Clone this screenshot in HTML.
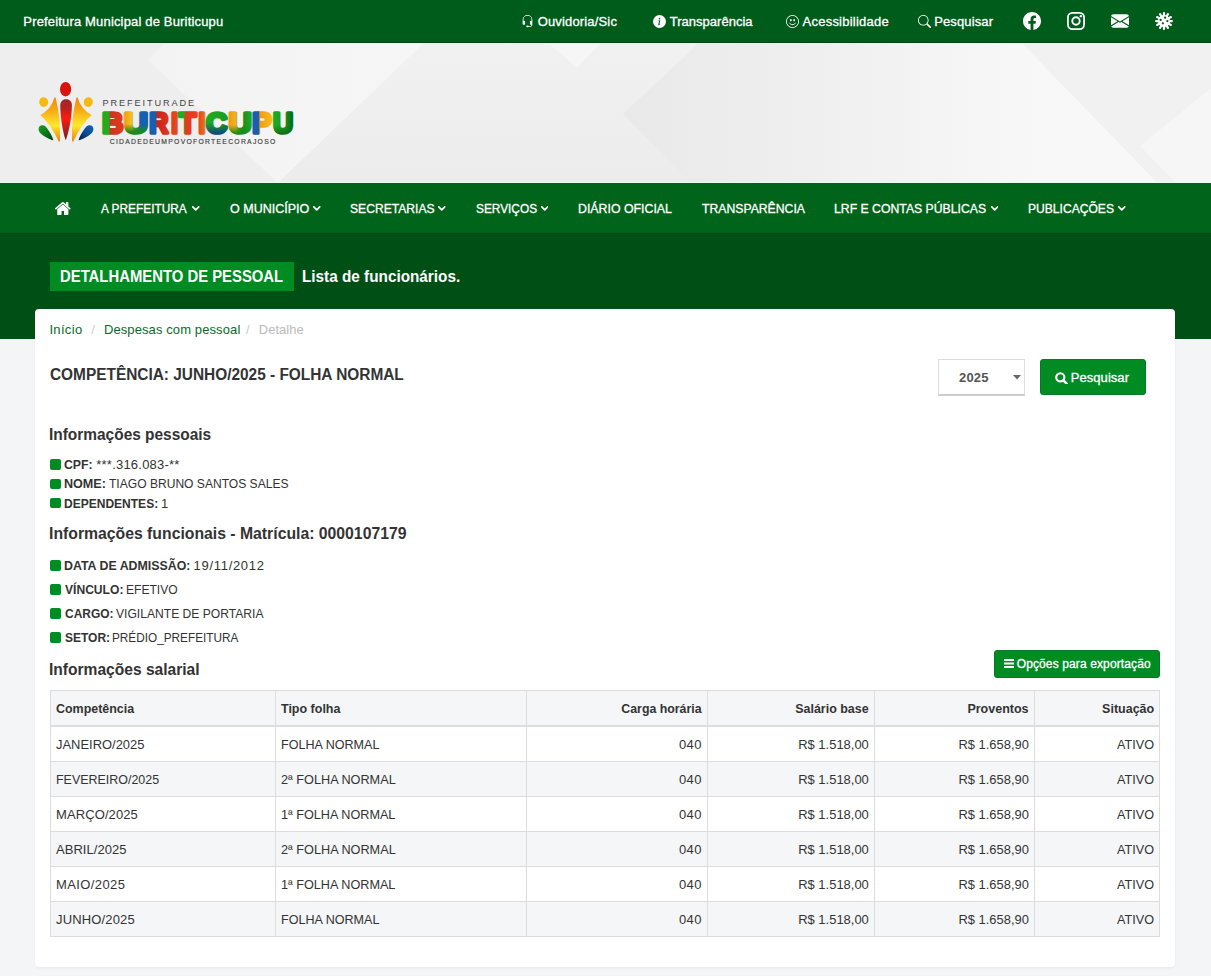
<!DOCTYPE html><html lang="pt-br"><head><meta charset="utf-8"><title>Detalhamento de Pessoal - Prefeitura Municipal de Buriticupu</title><style>
*{box-sizing:border-box}
html,body{margin:0;padding:0}
body{width:1211px;height:976px;overflow:hidden;position:relative;background:#f3f5f7;font-family:"Liberation Sans",sans-serif;font-size:13px;color:#333}
a{text-decoration:none}
.abs{position:absolute}
.t{position:absolute;white-space:nowrap;display:block;margin:0;padding:0;transform-origin:0 50%}
#topbar{position:absolute;left:0;top:0;width:1211px;height:43px;background:#005c1a;border-bottom:1px solid #004513}
#header{position:absolute;left:0;top:43px;width:1211px;height:140px;background:#f0f0f0;overflow:hidden}
#nav{position:absolute;left:0;top:183px;width:1211px;height:51px;background:#00651a;border-bottom:1px solid #004411}
#band{position:absolute;left:0;top:234px;width:1211px;height:105px;background:#005016}
#badge{position:absolute;left:50px;top:262px;width:244px;height:29px;background:#008c23}
#card{position:absolute;left:35px;top:309px;width:1140px;height:658px;background:#fff;border-radius:4px;box-shadow:0 1px 3px rgba(0,0,0,.06)}
.ico{position:absolute;display:block}
.w{-webkit-text-stroke:.3px #fff}
.bul{position:absolute;left:50.4px;width:10.5px;height:10.5px;border-radius:2px;background:#008c23}
.btn{position:absolute;background:#008c23;border:1px solid #057a28;border-radius:3px}
#sel{position:absolute;left:938px;top:359px;width:87px;height:37px;margin:0;background:#fff;border:1px solid #ddd;border-bottom:2px solid #ccc;border-radius:0;-webkit-appearance:none;appearance:none;outline:0;font-family:"Liberation Sans",sans-serif;font-size:13px;font-weight:700;color:#555;padding:0 0 0 20px;letter-spacing:.15px}
table{position:absolute;left:50px;top:690px;width:1110px;border-collapse:separate;border-spacing:0;table-layout:fixed;border-top:1px solid #ddd;border-left:1px solid #ddd;color:#333}
th,td{padding:0 5px;border-right:1px solid #ddd;border-bottom:1px solid #ddd;height:35px;line-height:34px;font-size:13px;text-align:left;white-space:nowrap;overflow:hidden;font-weight:400}
th{height:36px;border-bottom:2px solid #ddd;background:#f5f6f7;font-weight:700}
tr.g td{background:#f5f6f7}
.r{text-align:right}
.t.c{position:relative;top:1px;display:inline-block;transform-origin:0 50%;vertical-align:top}
.t.c.r{transform-origin:100% 50%}
</style></head><body>
<header>
<div id="topbar"></div>
<svg class="ico" style="left:521.2px;top:15.3px" width="13" height="13" viewBox="0 0 16 16" fill="#fff"><path d="M8 1a5 5 0 0 0-5 5v1h1a1 1 0 0 1 1 1v3a1 1 0 0 1-1 1H3a1 1 0 0 1-1-1V6a6 6 0 1 1 12 0v6a2.5 2.5 0 0 1-2.5 2.5H9.366a1 1 0 0 1-.866.5h-1a1 1 0 1 1 0-2h1a1 1 0 0 1 .866.5H11.500A1.500 1.500 0 0 0 13 12h-1a1 1 0 0 1-1-1V8a1 1 0 0 1 1-1h1V6a5 5 0 0 0-5-5z"/></svg>
<svg class="ico" style="left:652.9px;top:15.0px" width="13" height="13" viewBox="0 0 16 16" fill="#fff"><path d="M8 16A8 8 0 1 0 8 0a8 8 0 0 0 0 16zm.93-9.412-1 4.705c-.07.34.029.533.304.533.194 0 .487-.07.686-.246l-.088.416c-.287.346-.92.598-1.465.598-.703 0-1.002-.422-.808-1.319l.738-3.468c.064-.293.006-.399-.287-.47l-.451-.081.082-.381 2.290-.287zM8 5.500a1 1 0 1 1 0-2 1 1 0 0 1 0 2z"/></svg>
<svg class="ico" style="left:786.1px;top:15.3px" width="13" height="13" viewBox="0 0 16 16" fill="#fff"><path d="M8 15A7 7 0 1 1 8 1a7 7 0 0 1 0 14zm0 1A8 8 0 1 0 8 0a8 8 0 0 0 0 16z"/><path d="M4.285 9.567a.5.5 0 0 1 .683.183A3.498 3.498 0 0 0 8 11.500a3.498 3.498 0 0 0 3.032-1.750.5.5 0 1 1 .866.5A4.498 4.498 0 0 1 8 12.500a4.498 4.498 0 0 1-3.898-2.250.5.5 0 0 1 .183-.683zM7 6.500C7 7.328 6.552 8 6 8s-1-.672-1-1.500S5.448 5 6 5s1 .672 1 1.500zm4 0c0 .828-.448 1.500-1 1.500s-1-.672-1-1.500S9.448 5 10 5s1 .672 1 1.500z"/></svg>
<svg class="ico" style="left:918.2px;top:15.0px" width="13" height="13" viewBox="0 0 16 16" fill="#fff"><path d="M11.742 10.344a6.500 6.500 0 1 0-1.397 1.398h-.001c.03.04.062.078.098.115l3.850 3.850a1 1 0 0 0 1.415-1.414l-3.850-3.850a1.007 1.007 0 0 0-.115-.1zM12 6.500a5.500 5.500 0 1 1-11 0 5.500 5.500 0 0 1 11 0z"/></svg>
<svg class="ico" style="left:1023.0px;top:12.0px" width="18" height="18" viewBox="0 0 16 16" fill="#fff"><path d="M16 8.049c0-4.446-3.582-8.050-8-8.050C3.580 0-.002 3.603-.002 8.050c0 4.017 2.926 7.347 6.750 7.951v-5.625h-2.030V8.050H6.750V6.275c0-2.017 1.195-3.131 3.022-3.131.876 0 1.791.157 1.791.157v1.980h-1.009c-.993 0-1.303.621-1.303 1.258v1.510h2.218l-.354 2.326H9.250V16c3.824-.604 6.750-3.934 6.750-7.951z"/></svg>
<svg class="ico" style="left:1067.0px;top:12.0px" width="18" height="18" viewBox="0 0 16 16" fill="#fff"><rect x="0.8" y="0.8" width="14.4" height="14.4" rx="4" fill="none" stroke="#fff" stroke-width="1.6"/><circle cx="8" cy="8" r="3.3" fill="none" stroke="#fff" stroke-width="1.7"/><circle cx="12.3" cy="3.7" r="1.05"/></svg>
<svg class="ico" style="left:1111.0px;top:12.0px" width="18" height="18" viewBox="0 0 16 16" fill="#fff"><path d="M.05 3.555A2 2 0 0 1 2 2h12a2 2 0 0 1 1.950 1.555L8 8.414.05 3.555ZM0 4.697v7.104l5.803-3.558L0 4.697ZM6.761 8.830l-6.570 4.027A2 2 0 0 0 2 14h12a2 2 0 0 0 1.808-1.144l-6.570-4.027L8 9.586l-1.239-.757Zm3.436-.586L16 11.801V4.697l-5.803 3.546Z"/></svg>
<svg class="ico" style="left:1155.0px;top:12.0px" width="18" height="18" viewBox="0 0 16 16" fill="#fff"><path d="M8 0a1 1 0 0 1 1 1v1.402c0 .511.677.693.933.250l.7-1.214a1 1 0 0 1 1.733 1l-.701 1.214c-.256.443.240.939.683.683l1.214-.701a1 1 0 0 1 1 1.732l-1.214.701c-.443.256-.262.933.250.933H15a1 1 0 1 1 0 2h-1.402c-.512 0-.693.677-.250.933l1.214.701a1 1 0 1 1-1 1.732l-1.214-.7c-.443-.257-.939.240-.683.682l.701 1.214a1 1 0 1 1-1.732 1l-.701-1.214c-.256-.443-.933-.262-.933.250V15a1 1 0 1 1-2 0v-1.402c0-.512-.677-.693-.933-.250l-.701 1.214a1 1 0 0 1-1.732-1l.7-1.214c.257-.443-.240-.939-.682-.683l-1.214.701a1 1 0 1 1-1-1.732l1.214-.701c.443-.256.261-.933-.250-.933H1a1 1 0 1 1 0-2h1.402c.511 0 .693-.677.250-.933l-1.214-.701a1 1 0 1 1 1-1.732l1.214.701c.443.256.939-.240.683-.683l-.701-1.214a1 1 0 0 1 1.732-1l.701 1.214c.256.443.933.261.933-.250V1a1 1 0 0 1 1-1Zm2 5a1 1 0 1 0-2 0 1 1 0 0 0 2 0ZM6 7a1 1 0 1 0-2 0 1 1 0 0 0 2 0Zm1 4a1 1 0 1 0 0-2 1 1 0 0 0 0 2Zm5-3a1 1 0 1 0-2 0 1 1 0 0 0 2 0Z"/></svg>
<span class="t w" style="left:23.3px;top:15.0px;font-size:13px;line-height:13px;color:#fff;letter-spacing:0.166px;">Prefeitura Municipal de Buriticupu</span>
<a class="t w" href="#" style="left:537.7px;top:15.0px;font-size:13px;line-height:13px;color:#fff;letter-spacing:0.159px;">Ouvidoria/Sic</a>
<a class="t w" href="#" style="left:669.8px;top:15.0px;font-size:13px;line-height:13px;color:#fff;letter-spacing:0.009px;">Transparência</a>
<a class="t w" href="#" style="left:802.6px;top:15.0px;font-size:13px;line-height:13px;color:#fff;letter-spacing:0.225px;">Acessibilidade</a>
<a class="t w" href="#" style="left:934.2px;top:15.0px;font-size:13px;line-height:13px;color:#fff;letter-spacing:0.134px;">Pesquisar</a>
<div id="header"></div>
<svg class="ico" style="left:0;top:43px" width="1211" height="140" viewBox="0 43 1211 140">
<defs>
<linearGradient id="z0" x1="0" y1="0" x2="1" y2="0"><stop offset="0.0000" stop-color="#20ac22"/><stop offset="0.3600" stop-color="#20ac22"/><stop offset="0.4200" stop-color="#c8381c"/><stop offset="1.0000" stop-color="#e23a1c"/></linearGradient>
<linearGradient id="z1" x1="0" y1="0" x2="1" y2="0"><stop offset="0.0000" stop-color="#f29a14"/><stop offset="0.3000" stop-color="#f6c21c"/><stop offset="0.4200" stop-color="#7aa01c"/><stop offset="0.5800" stop-color="#1c78a0"/><stop offset="0.6800" stop-color="#1560b0"/><stop offset="1.0000" stop-color="#1560b0"/></linearGradient>
<linearGradient id="o1" x1="0" y1="0" x2="0" y2="1"><stop offset="0.55" stop-color="#1c8a1c" stop-opacity="0"/><stop offset="0.85" stop-color="#1c8a1c" stop-opacity="1"/></linearGradient>
<linearGradient id="z2" x1="0" y1="0" x2="1" y2="0"><stop offset="0.0000" stop-color="#1560b0"/><stop offset="0.3200" stop-color="#1560b0"/><stop offset="0.4000" stop-color="#c8241a"/><stop offset="1.0000" stop-color="#e23a1c"/></linearGradient>
<linearGradient id="z3" x1="0" y1="0" x2="1" y2="0"><stop offset="0.0000" stop-color="#e23a1c"/><stop offset="1.0000" stop-color="#ea4a1e"/></linearGradient>
<linearGradient id="z4" x1="0" y1="0" x2="1" y2="0"><stop offset="0.0000" stop-color="#20ac22"/><stop offset="0.3000" stop-color="#20ac22"/><stop offset="0.3800" stop-color="#e23a1c"/><stop offset="1.0000" stop-color="#e8401c"/></linearGradient>
<linearGradient id="z5" x1="0" y1="0" x2="1" y2="0"><stop offset="0.0000" stop-color="#e8401c"/><stop offset="1.0000" stop-color="#f0701c"/></linearGradient>
<linearGradient id="z6" x1="0" y1="0" x2="1" y2="0"><stop offset="0.0000" stop-color="#20ac22"/><stop offset="1.0000" stop-color="#1c9a1c"/></linearGradient>
<linearGradient id="o6" x1="0" y1="0" x2="0" y2="1"><stop offset="0.5" stop-color="#0e3f84" stop-opacity="0"/><stop offset="0.95" stop-color="#0e3f84" stop-opacity="1"/></linearGradient>
<linearGradient id="z7" x1="0" y1="0" x2="1" y2="0"><stop offset="0.0000" stop-color="#f29a14"/><stop offset="0.3000" stop-color="#f4b018"/><stop offset="0.4200" stop-color="#6a9a1c"/><stop offset="0.6000" stop-color="#1c8a1c"/><stop offset="1.0000" stop-color="#20ac22"/></linearGradient>
<linearGradient id="o7" x1="0" y1="0" x2="0" y2="1"><stop offset="0.6" stop-color="#1c8a1c" stop-opacity="0"/><stop offset="0.9" stop-color="#1c8a1c" stop-opacity="1"/></linearGradient>
<linearGradient id="z8" x1="0" y1="0" x2="1" y2="0"><stop offset="0.0000" stop-color="#1560b0"/><stop offset="0.3200" stop-color="#1560b0"/><stop offset="0.3800" stop-color="#f29a14"/><stop offset="1.0000" stop-color="#f6c21c"/></linearGradient>
<linearGradient id="z9" x1="0" y1="0" x2="1" y2="0"><stop offset="0.0000" stop-color="#20ac22"/><stop offset="0.5000" stop-color="#1c9a1c"/><stop offset="0.8000" stop-color="#0d6e16"/><stop offset="1.0000" stop-color="#0d6e16"/></linearGradient>
<linearGradient id="o9" x1="0" y1="0" x2="0" y2="1"><stop offset="0.6" stop-color="#0d6e16" stop-opacity="0"/><stop offset="0.95" stop-color="#0d6e16" stop-opacity="1"/></linearGradient>
<pattern id="gw" patternUnits="userSpaceOnUse" x="100" y="104" width="200" height="38"><g transform="translate(-100 -104)"><rect x="100" y="104" width="24.2" height="38" fill="url(#z0)"/><rect x="124.2" y="104" width="24.1" height="38" fill="url(#z1)"/><rect x="124.2" y="109" width="24.1" height="27" fill="url(#o1)"/><rect x="148.3" y="104" width="22.2" height="38" fill="url(#z2)"/><rect x="170.5" y="104" width="7.3" height="38" fill="url(#z3)"/><rect x="177.8" y="104" width="20.2" height="38" fill="url(#z4)"/><rect x="198" y="104" width="7.3" height="38" fill="url(#z5)"/><rect x="205.3" y="104" width="23.2" height="38" fill="url(#z6)"/><rect x="205.3" y="109" width="23.2" height="27" fill="url(#o6)"/><rect x="228.5" y="104" width="23.4" height="38" fill="url(#z7)"/><rect x="228.5" y="109" width="23.4" height="27" fill="url(#o7)"/><rect x="251.9" y="104" width="20.9" height="38" fill="url(#z8)"/><rect x="272.8" y="104" width="23.2" height="38" fill="url(#z9)"/><rect x="272.8" y="109" width="23.2" height="27" fill="url(#o9)"/></g></pattern>
<linearGradient id="gr" x1="0" y1="0" x2="0" y2="1"><stop offset="0.0000" stop-color="#a0262a"/><stop offset="0.2200" stop-color="#b4241e"/><stop offset="0.4600" stop-color="#ff1a10"/><stop offset="0.7500" stop-color="#b0201c"/><stop offset="1.0000" stop-color="#7a1818"/></linearGradient>
<linearGradient id="gy" x1="0" y1="0" x2="0" y2="1"><stop offset="0.0000" stop-color="#f08a10"/><stop offset="0.2800" stop-color="#f8a814"/><stop offset="0.6400" stop-color="#fde82c"/><stop offset="0.8000" stop-color="#f8b818"/><stop offset="1.0000" stop-color="#ee8410"/></linearGradient>
<linearGradient id="gg" x1="0" y1="0" x2="1" y2="1"><stop offset="0.0000" stop-color="#14a020"/><stop offset="0.5000" stop-color="#0c7a18"/><stop offset="1.0000" stop-color="#083c10"/></linearGradient>
<linearGradient id="gb" x1="1" y1="0" x2="0" y2="1"><stop offset="0.0000" stop-color="#1460b4"/><stop offset="0.5000" stop-color="#0c4c94"/><stop offset="1.0000" stop-color="#061c40"/></linearGradient>
</defs>
<defs><linearGradient id="h1" gradientUnits="userSpaceOnUse" x1="623" y1="0" x2="1040" y2="0"><stop offset="0" stop-color="#e9e9e9"/><stop offset=".45" stop-color="#efefef"/><stop offset="1" stop-color="#f8f8f8"/></linearGradient><linearGradient id="h2" gradientUnits="userSpaceOnUse" x1="150" y1="0" x2="430" y2="0"><stop offset="0" stop-color="#f3f3f3"/><stop offset="1" stop-color="#f6f6f6"/></linearGradient><linearGradient id="h3" gradientUnits="userSpaceOnUse" x1="0" y1="43" x2="0" y2="183"><stop offset="0" stop-color="#f1f1f1"/><stop offset="1" stop-color="#ececec"/></linearGradient></defs><rect x="0" y="43" width="1211" height="140" fill="#efefef"/><polygon points="0,43 165,43 148,60 278,183 0,183" fill="#eeeeee"/><polygon points="148,60 165,43 424,43 278,183" fill="url(#h2)"/><polygon points="424,43 699,43 623,114 691,183 278,183" fill="url(#h3)"/><polygon points="548,43 601,43 577,68" fill="#f6f6f6"/><polygon points="623,114 699,43 1022,43 1158,183 691,183" fill="url(#h1)"/><polygon points="1022,43 1211,43 1211,183 1158,183" fill="#f1f1f1"/><polygon points="1211,88 1140,146 1176,183 1211,183" fill="#f6f6f6"/><rect x="0" y="43" width="1211" height="1" fill="#e2fff0"/><rect x="0" y="182" width="1211" height="1" fill="#e2fff0"/>
<ellipse cx="65.6" cy="89.2" rx="5.6" ry="7.2" fill="#d6160a"/>
<path d="M60.3 105.2C60.3 97.3 71.9 97.3 71.9 105.2C71.9 118 68.3 134 65.7 140.2C63.2 134 60.3 118 60.3 105.2Z" fill="url(#gr)"/>
<ellipse cx="43.7" cy="102.1" rx="4.5" ry="4.8" fill="#f6b90f" transform="rotate(-20 43.7 102.1)"/>
<ellipse cx="88.3" cy="102.1" rx="4.5" ry="4.8" fill="#f6b90f" transform="rotate(20 88.3 102.1)"/>
<path d="M54.4 97.6Q51 109.500 40.4 115Q51.200 125 58.7 141.4L60 141.4Q60.800 118 55.600 97.6Z" fill="url(#gy)"/>
<path d="M77.6 97.6Q81 109.500 91.6 115Q80.800 125 73.3 141.4L72 141.4Q71.200 118 76.400 97.6Z" fill="url(#gy)"/>
<path d="M38.6 129.2C38.400 125.4 43.2 123.800 46.2 127.2C49.4 131 52.800 137 53.4 140.200C49.6 139.600 43.2 136 40.4 133.200C39.2 132 38.700 130.600 38.600 129.200Z" fill="url(#gg)"/>
<path d="M93.4 129.200C93.600 125.400 88.800 123.800 85.800 127.200C82.600 131 79.200 137 78.600 140.200C82.400 139.600 88.800 136 91.600 133.200C92.800 132 93.300 130.600 93.400 129.200Z" fill="url(#gb)"/>
<text x="102.6" y="105.8" font-family="Liberation Sans, sans-serif" font-size="9.2" fill="#444" textLength="91.5" lengthAdjust="spacing">PREFEITURADE</text>
<text y="133.1" font-family="Liberation Sans, sans-serif" font-size="30.2" font-weight="700" fill="url(#gw)" stroke="url(#gw)" stroke-width="3.7" stroke-linejoin="round"><tspan x="102.1" textLength="21.3" lengthAdjust="spacingAndGlyphs">B</tspan><tspan x="123.9" textLength="24.0" lengthAdjust="spacingAndGlyphs">U</tspan><tspan x="149.2" textLength="19.1" lengthAdjust="spacingAndGlyphs">R</tspan><tspan x="171.2" textLength="6.7" lengthAdjust="spacingAndGlyphs">I</tspan><tspan x="179.1" textLength="17.3" lengthAdjust="spacingAndGlyphs">T</tspan><tspan x="198.6" textLength="6.7" lengthAdjust="spacingAndGlyphs">I</tspan><tspan x="206.1" textLength="21.3" lengthAdjust="spacingAndGlyphs">C</tspan><tspan x="228.6" textLength="23.2" lengthAdjust="spacingAndGlyphs">U</tspan><tspan x="252.2" textLength="19.5" lengthAdjust="spacingAndGlyphs">P</tspan><tspan x="273.1" textLength="20.1" lengthAdjust="spacingAndGlyphs">U</tspan></text>
<text x="109.7" y="144" font-family="Liberation Sans, sans-serif" font-size="6.8" fill="#3c3c3c" stroke="#3c3c3c" stroke-width=".15" textLength="165.6" lengthAdjust="spacing">CIDADEDEUMPOVOFORTEECORAJOSO</text>
</svg>
</header>
<nav>
<div id="nav"></div>
<svg preserveAspectRatio="none" class="ico" style="left:55.4px;top:202.4px" width="15.6" height="12.9" viewBox="26 253 1612 1283" fill="#fff"><path d="M1408 992v480q0 26-19 45t-45 19h-384v-384h-256v384h-384q-26 0-45-19t-19-45v-480q0-1 .5-3t.5-3l575-474 575 474q1 2 1 6zm223-69l-62 74q-8 9-21 11h-3q-13 0-21-7l-692-577-692 577q-12 8-24 7-13-2-21-11l-62-74q-8-10-7-23.500t11-21.500l719-599q32-26 76-26t76 26l244 204v-195q0-14 9-23t23-9h192q14 0 23 9t9 23v408l219 182q10 8 11 21.500t-7 23.500z"/></svg>
<svg class="ico" style="left:192.3px;top:206.3px" width="7.5" height="5" viewBox="0 0 7.5 5" fill="#fff"><path d="M0.8 0.8L3.75 3.8L6.7 0.8" fill="none" stroke="#fff" stroke-width="1.7" stroke-linecap="round" stroke-linejoin="round"/></svg>
<svg class="ico" style="left:313.0px;top:206.3px" width="7.5" height="5" viewBox="0 0 7.5 5" fill="#fff"><path d="M0.8 0.8L3.75 3.8L6.7 0.8" fill="none" stroke="#fff" stroke-width="1.7" stroke-linecap="round" stroke-linejoin="round"/></svg>
<svg class="ico" style="left:438.3px;top:206.3px" width="7.5" height="5" viewBox="0 0 7.5 5" fill="#fff"><path d="M0.8 0.8L3.75 3.8L6.7 0.8" fill="none" stroke="#fff" stroke-width="1.7" stroke-linecap="round" stroke-linejoin="round"/></svg>
<svg class="ico" style="left:540.6px;top:206.3px" width="7.5" height="5" viewBox="0 0 7.5 5" fill="#fff"><path d="M0.8 0.8L3.75 3.8L6.7 0.8" fill="none" stroke="#fff" stroke-width="1.7" stroke-linecap="round" stroke-linejoin="round"/></svg>
<svg class="ico" style="left:990.7px;top:206.3px" width="7.5" height="5" viewBox="0 0 7.5 5" fill="#fff"><path d="M0.8 0.8L3.75 3.8L6.7 0.8" fill="none" stroke="#fff" stroke-width="1.7" stroke-linecap="round" stroke-linejoin="round"/></svg>
<svg class="ico" style="left:1118.1px;top:206.3px" width="7.5" height="5" viewBox="0 0 7.5 5" fill="#fff"><path d="M0.8 0.8L3.75 3.8L6.7 0.8" fill="none" stroke="#fff" stroke-width="1.7" stroke-linecap="round" stroke-linejoin="round"/></svg>
<a class="t w" href="#" style="left:101.4px;top:201.8px;font-size:13px;line-height:13px;color:#fff;transform:scaleX(0.9135);">A PREFEITURA</a>
<a class="t w" href="#" style="left:229.6px;top:201.8px;font-size:13px;line-height:13px;color:#fff;transform:scaleX(0.9623);">O MUNICÍPIO</a>
<a class="t w" href="#" style="left:350.0px;top:201.8px;font-size:13px;line-height:13px;color:#fff;transform:scaleX(0.9318);">SECRETARIAS</a>
<a class="t w" href="#" style="left:475.8px;top:201.8px;font-size:13px;line-height:13px;color:#fff;transform:scaleX(0.9122);">SERVIÇOS</a>
<a class="t w" href="#" style="left:577.8px;top:201.8px;font-size:13px;line-height:13px;color:#fff;transform:scaleX(0.9496);">DIÁRIO OFICIAL</a>
<a class="t w" href="#" style="left:701.7px;top:201.8px;font-size:13px;line-height:13px;color:#fff;transform:scaleX(0.9395);">TRANSPARÊNCIA</a>
<a class="t w" href="#" style="left:834.3px;top:201.8px;font-size:13px;line-height:13px;color:#fff;transform:scaleX(0.9418);">LRF E CONTAS PÚBLICAS</a>
<a class="t w" href="#" style="left:1027.9px;top:201.8px;font-size:13px;line-height:13px;color:#fff;transform:scaleX(0.9295);">PUBLICAÇÕES</a>
</nav>
<main>
<div id="band"></div><div id="badge"></div>
<h1 class="t" style="left:59.8px;top:269.0px;font-size:16px;line-height:16px;font-weight:700;color:#fff;transform:scaleX(0.9287);">DETALHAMENTO DE PESSOAL</h1>
<span class="t" style="left:302.4px;top:269.0px;font-size:16px;line-height:16px;font-weight:700;color:#fff;transform:scaleX(0.9565);">Lista de funcionários.</span>
<div id="card"></div>
<a class="t" href="#" style="left:49.4px;top:323.1px;font-size:13px;line-height:13px;color:#0a6a2a;letter-spacing:0.334px;">Início</a>
<span class="t" style="left:91.3px;top:323.1px;font-size:13px;line-height:13px;color:#ccc;">/</span>
<a class="t" href="#" style="left:103.9px;top:323.1px;font-size:13px;line-height:13px;color:#0a6a2a;letter-spacing:0.104px;">Despesas com pessoal</a>
<span class="t" style="left:246.1px;top:323.1px;font-size:13px;line-height:13px;color:#ccc;">/</span>
<span class="t" style="left:258.7px;top:323.1px;font-size:13px;line-height:13px;color:#bbb;letter-spacing:0.056px;">Detalhe</span>
<h2 class="t" style="left:49.9px;top:366.6px;font-size:16px;line-height:16px;font-weight:700;color:#333;transform:scaleX(0.9628);">COMPETÊNCIA: JUNHO/2025 - FOLHA NORMAL</h2>
<select id="sel"><option>2025</option><option>2024</option><option>2023</option></select>
<svg class="ico" style="left:1013.4px;top:375px" width="8" height="4.5" viewBox="0 0 8 4.5"><path d="M0 0h8L4 4.5z" fill="#666"/></svg>
<div class="btn" style="left:1040px;top:359px;width:106px;height:36px"></div>
<a class="t w" href="#" style="left:1070.8px;top:371.0px;font-size:13px;line-height:13px;color:#fff;letter-spacing:0.046px;">Pesquisar</a>
<h3 class="t" style="left:49.4px;top:426.8px;font-size:16px;line-height:16px;font-weight:700;color:#333;transform:scaleX(0.9650);">Informações pessoais</h3>
<i class="bul" style="top:459.2px"></i>
<b class="t" style="left:64.4px;top:458.1px;font-size:13px;line-height:13px;font-weight:700;color:#333;transform:scaleX(0.9430);">CPF:</b>
<span class="t" style="left:96.3px;top:458.1px;font-size:13px;line-height:13px;color:#333;letter-spacing:0.220px;">***.316.083-**</span>
<i class="bul" style="top:478.5px"></i>
<b class="t" style="left:64.0px;top:477.4px;font-size:13px;line-height:13px;font-weight:700;color:#333;transform:scaleX(0.9677);">NOME:</b>
<span class="t" style="left:109.4px;top:477.4px;font-size:13px;line-height:13px;color:#333;transform:scaleX(0.9283);">TIAGO BRUNO SANTOS SALES</span>
<i class="bul" style="top:497.9px"></i>
<b class="t" style="left:64.0px;top:496.8px;font-size:13px;line-height:13px;font-weight:700;color:#333;transform:scaleX(0.9244);">DEPENDENTES:</b>
<span class="t" style="left:161.1px;top:496.8px;font-size:13px;line-height:13px;color:#333;">1</span>
<h3 class="t" style="left:49.4px;top:526.0px;font-size:16px;line-height:16px;font-weight:700;color:#333;transform:scaleX(0.9853);">Informações funcionais - Matrícula: 0000107179</h3>
<i class="bul" style="top:560.3px"></i>
<b class="t" style="left:64.3px;top:559.2px;font-size:13px;line-height:13px;font-weight:700;color:#333;transform:scaleX(0.9511);">DATA DE ADMISSÃO:</b>
<span class="t" style="left:193.6px;top:559.2px;font-size:13px;line-height:13px;color:#333;letter-spacing:0.693px;">19/11/2012</span>
<i class="bul" style="top:584.1px"></i>
<b class="t" style="left:65.1px;top:583.0px;font-size:13px;line-height:13px;font-weight:700;color:#333;transform:scaleX(0.9296);">VÍNCULO:</b>
<span class="t" style="left:126.0px;top:583.0px;font-size:13px;line-height:13px;color:#333;transform:scaleX(0.9290);">EFETIVO</span>
<i class="bul" style="top:608.1px"></i>
<b class="t" style="left:64.7px;top:607.0px;font-size:13px;line-height:13px;font-weight:700;color:#333;transform:scaleX(0.9193);">CARGO:</b>
<span class="t" style="left:116.2px;top:607.0px;font-size:13px;line-height:13px;color:#333;transform:scaleX(0.9306);">VIGILANTE DE PORTARIA</span>
<i class="bul" style="top:632.1px"></i>
<b class="t" style="left:64.9px;top:631.0px;font-size:13px;line-height:13px;font-weight:700;color:#333;transform:scaleX(0.9224);">SETOR:</b>
<span class="t" style="left:112.2px;top:631.0px;font-size:13px;line-height:13px;color:#333;transform:scaleX(0.9064);">PRÉDIO_PREFEITURA</span>
<h3 class="t" style="left:49.4px;top:661.8px;font-size:16px;line-height:16px;font-weight:700;color:#333;transform:scaleX(0.9732);">Informações salarial</h3>
<div class="btn" style="left:994px;top:650px;width:166px;height:28px"></div>
<a class="t w" href="#" style="left:1016.7px;top:657.6px;font-size:12px;line-height:12px;color:#fff;letter-spacing:0.120px;">Opções para exportação</a>
<table><colgroup><col style="width:225px"><col style="width:251px"><col style="width:181px"><col style="width:167px"><col style="width:160px"><col style="width:125px"></colgroup>
<thead><tr><th><span class="t c" style="transform:scaleX(0.9569);">Competência</span></th><th><span class="t c" style="transform:scaleX(0.9605);">Tipo folha</span></th><th class="r"><span class="t c r" style="transform:scaleX(0.9488);">Carga horária</span></th><th class="r"><span class="t c r" style="transform:scaleX(0.9583);">Salário base</span></th><th class="r"><span class="t c r" style="transform:scaleX(0.9625);">Proventos</span></th><th class="r"><span class="t c r" style="transform:scaleX(0.9616);">Situação</span></th></tr></thead><tbody>
<tr><td><span class="t c" style="transform:scaleX(0.9950);">JANEIRO/2025</span></td><td><span class="t c" style="transform:scaleX(0.9661);">FOLHA NORMAL</span></td><td class="r"><span class="t c r" style="letter-spacing:0.470px;">040</span></td><td class="r"><span class="t c r" style="transform:scaleX(0.9972);">R$ 1.518,00</span></td><td class="r"><span class="t c r" style="transform:scaleX(0.9929);">R$ 1.658,90</span></td><td class="r"><span class="t c r" style="transform:scaleX(0.9713);">ATIVO</span></td></tr>
<tr class="g"><td><span class="t c" style="transform:scaleX(0.9575);">FEVEREIRO/2025</span></td><td><span class="t c" style="transform:scaleX(0.9762);">2ª FOLHA NORMAL</span></td><td class="r"><span class="t c r" style="letter-spacing:0.470px;">040</span></td><td class="r"><span class="t c r" style="transform:scaleX(0.9972);">R$ 1.518,00</span></td><td class="r"><span class="t c r" style="transform:scaleX(0.9929);">R$ 1.658,90</span></td><td class="r"><span class="t c r" style="transform:scaleX(0.9713);">ATIVO</span></td></tr>
<tr><td><span class="t c" style="letter-spacing:0.103px;">MARÇO/2025</span></td><td><span class="t c" style="transform:scaleX(0.9736);">1ª FOLHA NORMAL</span></td><td class="r"><span class="t c r" style="letter-spacing:0.470px;">040</span></td><td class="r"><span class="t c r" style="transform:scaleX(0.9972);">R$ 1.518,00</span></td><td class="r"><span class="t c r" style="transform:scaleX(0.9929);">R$ 1.658,90</span></td><td class="r"><span class="t c r" style="transform:scaleX(0.9713);">ATIVO</span></td></tr>
<tr class="g"><td><span class="t c" style="letter-spacing:0.036px;">ABRIL/2025</span></td><td><span class="t c" style="transform:scaleX(0.9762);">2ª FOLHA NORMAL</span></td><td class="r"><span class="t c r" style="letter-spacing:0.470px;">040</span></td><td class="r"><span class="t c r" style="transform:scaleX(0.9972);">R$ 1.518,00</span></td><td class="r"><span class="t c r" style="transform:scaleX(0.9929);">R$ 1.658,90</span></td><td class="r"><span class="t c r" style="transform:scaleX(0.9713);">ATIVO</span></td></tr>
<tr><td><span class="t c" style="letter-spacing:0.398px;">MAIO/2025</span></td><td><span class="t c" style="transform:scaleX(0.9736);">1ª FOLHA NORMAL</span></td><td class="r"><span class="t c r" style="letter-spacing:0.470px;">040</span></td><td class="r"><span class="t c r" style="transform:scaleX(0.9972);">R$ 1.518,00</span></td><td class="r"><span class="t c r" style="transform:scaleX(0.9929);">R$ 1.658,90</span></td><td class="r"><span class="t c r" style="transform:scaleX(0.9713);">ATIVO</span></td></tr>
<tr class="g"><td><span class="t c" style="letter-spacing:0.158px;">JUNHO/2025</span></td><td><span class="t c" style="transform:scaleX(0.9661);">FOLHA NORMAL</span></td><td class="r"><span class="t c r" style="letter-spacing:0.470px;">040</span></td><td class="r"><span class="t c r" style="transform:scaleX(0.9972);">R$ 1.518,00</span></td><td class="r"><span class="t c r" style="transform:scaleX(0.9929);">R$ 1.658,90</span></td><td class="r"><span class="t c r" style="transform:scaleX(0.9713);">ATIVO</span></td></tr>
</tbody></table>
<svg class="ico" style="left:1055.3px;top:371.6px" width="12.8" height="12.8" viewBox="0 0 12.8 12.8" fill="#fff"><circle cx="5.3" cy="5.3" r="4.1" fill="none" stroke="#fff" stroke-width="2.1"/><path d="M8.4 8.4L11.6 11.6" stroke="#fff" stroke-width="2.5" stroke-linecap="round"/></svg>
<svg class="ico" style="left:1003.6px;top:659.0px" width="10.8" height="9" viewBox="0 0 10.8 9" fill="#fff"><rect x="0" y="0" width="10.8" height="2"/><rect x="0" y="3.5" width="10.8" height="2"/><rect x="0" y="7" width="10.8" height="2"/></svg>
</main>
</body></html>
